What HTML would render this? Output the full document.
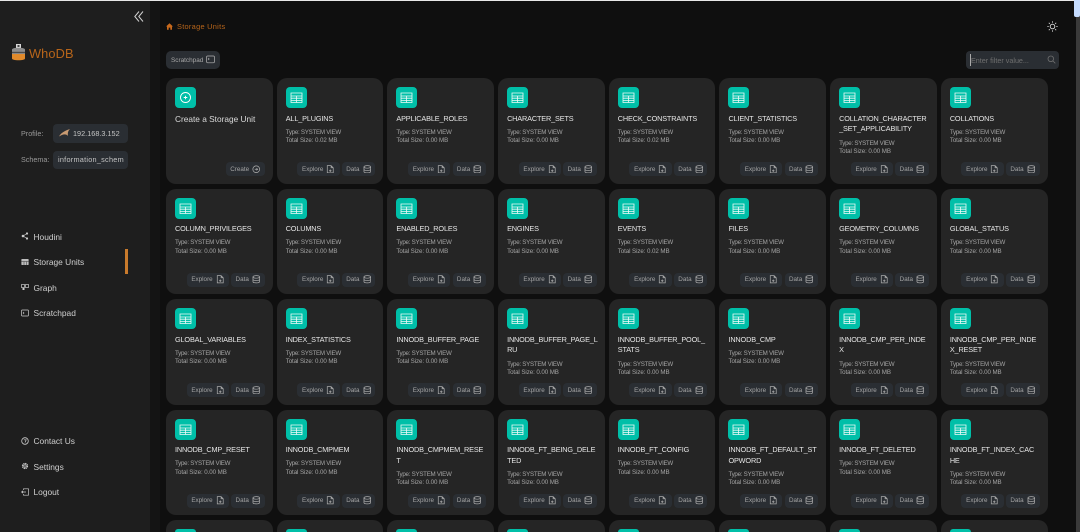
<!DOCTYPE html>
<html><head><meta charset="utf-8"><style>
*{box-sizing:border-box}
html,body{margin:0;width:1080px;height:532px;overflow:hidden;background:#0f0f0f;font-family:"Liberation Sans",sans-serif}
#page{position:relative;width:1080px;height:532px;overflow:hidden;background:#0f0f0f}
.abs{position:absolute}
#side{left:0;top:0;width:150px;height:532px;background:#1e1e1e}
#gut{left:150px;top:0;width:10px;height:532px;background:#141414}
.nav{position:absolute;left:33.5px;font-size:8.4px;line-height:12px;color:#cfcfcf;white-space:nowrap}
.nav svg{position:absolute;left:-13px;top:1.5px;width:8px;height:8px}
.lab{position:absolute;left:21px;font-size:7.2px;line-height:10px;color:#9a9a9a}
.sel{position:absolute;left:53px;width:75px;background:#2a2e33;border-radius:4px;color:#c4c4c4;font-size:7.3px;overflow:hidden;white-space:nowrap}
#grid{position:absolute;left:166px;top:78px;height:454px;overflow:hidden;display:grid;grid-template-columns:repeat(8,106.7px);grid-template-rows:repeat(4,105.5px) 12px;column-gap:4px;row-gap:5px}
.c{position:relative;background:#252525;border-radius:10px;padding:9px;overflow:hidden}
.c.last{border-radius:10px 10px 0 0;padding-bottom:0}
.c.last .i{height:3px;border-radius:4px 4px 0 0}
.i{width:21px;height:21px;background:#00bfa8;border-radius:4px;display:flex;align-items:center;justify-content:center}
.i svg{width:13px;height:13px}
.t{margin-top:5.5px;font-size:7.3px;line-height:10.7px;color:#e6e6e6;letter-spacing:-.15px;white-space:nowrap}
.m{margin-top:4.6px;font-size:6.2px;line-height:8.3px;color:#a4a4a4;white-space:nowrap;letter-spacing:-.08px}
.m::first-line{letter-spacing:-.27px}
.big{font-size:8.3px;color:#dadada;margin-top:6.3px;letter-spacing:0}
.b{position:absolute;bottom:7.5px;right:8px;display:flex;gap:2.2px}
.b span{height:14px;background:#2a2e33;border-radius:4px;color:#a4a4a4;font-size:6.3px;display:flex;align-items:center;justify-content:center;gap:3px}
.b .e{width:42.5px}.b .d{width:33.5px}.b .cr{width:38.5px}
.b svg{width:8.5px;height:8.5px}
</style></head><body>
<div id="page">
<svg width="0" height="0" style="position:absolute"><defs>
<symbol id="tb" viewBox="0 0 13 13"><path d="M1 2h11v9.5H1zM1 5h11M1 7.2h11M1 9.4h11M6.5 5v6.5" fill="none" stroke="#f0fbf9" stroke-width=".8"/></symbol>
<symbol id="pl" viewBox="0 0 13 13"><circle cx="6.5" cy="6.5" r="5" fill="none" stroke="#fff" stroke-width=".9"/><path d="M4.7 6.5h3.6M6.5 4.7v3.6" stroke="#fff" stroke-width=".9"/></symbol>
<symbol id="fl" viewBox="0 0 8 8"><path d="M1.2.6h3.6l2 2v4.8H1.2zM4.8.6v2h2M2.8 5.4h2.4M4 4.2v2.4" fill="none" stroke="#aaa" stroke-width=".7"/></symbol>
<symbol id="db" viewBox="0 0 8 8"><ellipse cx="4" cy="1.8" rx="3.1" ry="1.2" fill="none" stroke="#aaa" stroke-width=".7"/><path d="M.9 1.8v4.4c0 .7 1.4 1.2 3.1 1.2s3.1-.5 3.1-1.2V1.8M.9 4c0 .7 1.4 1.2 3.1 1.2S7.1 4.7 7.1 4" fill="none" stroke="#aaa" stroke-width=".7"/></symbol>
<symbol id="cp" viewBox="0 0 8 8"><circle cx="4" cy="4" r="3.2" fill="none" stroke="#aaa" stroke-width=".7"/><path d="M2.6 4h2.8M4.2 2.9 5.4 4 4.2 5.1" fill="none" stroke="#aaa" stroke-width=".6"/></symbol>
</defs></svg>

<div class="abs" id="side"></div><div class="abs" id="gut"></div>

<svg class="abs" style="left:134px;top:10px" width="10" height="13" viewBox="0 0 10 13"><path d="M5 1.5.8 6.5 5 11.5M9 1.5 4.8 6.5 9 11.5" fill="none" stroke="#d0d0d0" stroke-width="1"/></svg>

<svg class="abs" style="left:11px;top:43px" width="15" height="19" viewBox="0 0 15 19"><rect x="5" y="1" width="5" height="5" fill="#d8d8d8"/><rect x="6.5" y="2" width="2" height="2" fill="#444"/><path d="M1 6.5c0-1 2.5-1.800 6.500-1.800S14 5.500 14 6.500V11H1z" fill="#8d8d8d"/><rect x="1" y="8.8" width="13" height="1.3" fill="#4a4a4a"/><path d="M1 11h13v4.500c0 1-2.500 1.800-6.500 1.800S1 16.500 1 15.500z" fill="#e08a2c"/></svg>
<div class="abs" style="left:29px;top:45px;font-size:12.8px;line-height:17px;color:#b8651a;letter-spacing:.1px">WhoDB</div>

<div class="lab" style="top:129px">Profile:</div>
<div class="sel" style="top:124px;height:19px;line-height:19px;padding-left:20px">192.168.3.152</div>
<svg class="abs" style="left:58px;top:128px" width="13" height="10" viewBox="0 0 13 10"><path d="M1 8.500C3 5 6 3 12 1 10 3 9.500 5 10 8 8 5.500 5 6 1 8.500z" fill="#c89a72"/></svg>
<div class="lab" style="top:155px">Schema:</div>
<div class="sel" style="top:151px;height:18px;line-height:18px;padding-left:5px;letter-spacing:.25px">information_schem</div>

<div class="nav" style="top:230.5px"><svg viewBox="0 0 8 8"><circle cx="2" cy="4" r="1.3" fill="#ccc"/><circle cx="6" cy="1.5" r="1.1" fill="#ccc"/><circle cx="6" cy="6.500" r="1.1" fill="#ccc"/><path d="M2 4 6 1.500M2 4 6 6.500" stroke="#ccc" stroke-width=".7"/></svg>Houdini</div>
<div class="nav" style="top:256px"><svg viewBox="0 0 8 8"><rect x=".4" y="1" width="7.2" height="6" rx=".5" fill="#bdbdbd"/><path d="M.4 3.500h7.200M3 3.500V7M5.300 3.500V7" stroke="#333" stroke-width=".5"/></svg>Storage Units</div>
<div class="nav" style="top:281.5px"><svg viewBox="0 0 8 8"><rect x=".5" y="1.5" width="3" height="3" fill="none" stroke="#ccc" stroke-width=".7"/><rect x="4.5" y="1.5" width="3" height="3" fill="none" stroke="#ccc" stroke-width=".7"/><rect x="1.5" y="5" width="2" height="2" fill="#ccc"/></svg>Graph</div>
<div class="nav" style="top:307px"><svg viewBox="0 0 8 8"><rect x=".5" y="1" width="7" height="6" rx=".8" fill="none" stroke="#ccc" stroke-width=".7"/><path d="M2 3l1 1-1 1" fill="none" stroke="#ccc" stroke-width=".6"/></svg>Scratchpad</div>
<div class="abs" style="left:125px;top:249px;width:3px;height:25px;background:#c87a2c"></div>

<div class="nav" style="top:435px"><svg viewBox="0 0 8 8"><circle cx="4" cy="4" r="3.3" fill="none" stroke="#ccc" stroke-width=".8"/><path d="M2.800 2.800h2.400L4 5.500" fill="none" stroke="#ccc" stroke-width=".7"/></svg>Contact Us</div>
<div class="nav" style="top:460.5px"><svg viewBox="0 0 8 8"><circle cx="4" cy="4" r="2.2" fill="none" stroke="#ccc" stroke-width="1.8" stroke-dasharray="1.2 .5"/><circle cx="4" cy="4" r="1" fill="#888"/></svg>Settings</div>
<div class="nav" style="top:486px"><svg viewBox="0 0 8 8"><path d="M2.500 2V.8h5v6.400h-5V6M.5 4h4.500M2 2.800.5 4 2 5.200" fill="none" stroke="#ccc" stroke-width=".7"/></svg>Logout</div>

<svg class="abs" style="left:166px;top:23px" width="7" height="7" viewBox="0 0 7 7"><path d="M3.500.3 7 3.500H6V6.800H4.300V4.600H2.700V6.800H1V3.500H0z" fill="#c8691c"/></svg>
<div class="abs" style="left:177px;top:21.5px;font-size:7.4px;line-height:10px;color:#b8651a;letter-spacing:.28px">Storage Units</div>

<svg class="abs" style="left:1047px;top:21px" width="11" height="11" viewBox="0 0 11 11"><circle cx="5.500" cy="5.500" r="2.300" fill="none" stroke="#ddd" stroke-width=".9"/><path d="M5.500.3v1.500M5.500 9.200v1.500M.3 5.500h1.500M9.200 5.500h1.500M1.800 1.800l1 1M8.200 8.200l1 1M1.800 9.200l1-1M8.200 2.800l1-1" stroke="#ddd" stroke-width=".8"/></svg>

<div class="abs" style="left:166px;top:51px;width:54px;height:18px;background:#2a2e33;border-radius:5px;color:#a8a8a8;font-size:6.4px;line-height:19px;padding-left:5px">Scratchpad</div>
<svg class="abs" style="left:206px;top:55px" width="9" height="9" viewBox="0 0 9 9"><rect x=".6" y="1" width="7.8" height="6.8" rx="1" fill="none" stroke="#b5b5b5" stroke-width=".7"/><path d="M2 3l1.200 1L2 5" fill="none" stroke="#b5b5b5" stroke-width=".6"/></svg>

<div class="abs" style="left:966px;top:51px;width:93px;height:18px;background:#2a2e33;border-radius:4px;color:#6f6f6f;font-size:7.2px;line-height:19px;padding-left:5px">Enter filter value...</div>
<div class="abs" style="left:970px;top:54px;width:1px;height:12px;background:#aaa"></div>
<svg class="abs" style="left:1047px;top:55px" width="9" height="9" viewBox="0 0 9 9"><circle cx="3.800" cy="3.800" r="2.800" fill="none" stroke="#6f6f6f" stroke-width=".8"/><path d="M6 6l2.300 2.300" stroke="#6f6f6f" stroke-width=".8"/></svg>

<div id="grid">
<div class="c"><div class="i"><svg><use href="#pl"/></svg></div><div class="t big">Create a Storage Unit</div><div class="b"><span class="cr">Create<svg><use href="#cp"/></svg></span></div></div>
<div class="c"><div class="i"><svg><use href="#tb"/></svg></div><div class="t">ALL_PLUGINS</div><div class="m">Type: SYSTEM VIEW<br>Total Size: 0.02 MB</div><div class="b"><span class="e">Explore<svg><use href="#fl"/></svg></span><span class="d">Data<svg><use href="#db"/></svg></span></div></div>
<div class="c"><div class="i"><svg><use href="#tb"/></svg></div><div class="t">APPLICABLE_ROLES</div><div class="m">Type: SYSTEM VIEW<br>Total Size: 0.00 MB</div><div class="b"><span class="e">Explore<svg><use href="#fl"/></svg></span><span class="d">Data<svg><use href="#db"/></svg></span></div></div>
<div class="c"><div class="i"><svg><use href="#tb"/></svg></div><div class="t">CHARACTER_SETS</div><div class="m">Type: SYSTEM VIEW<br>Total Size: 0.00 MB</div><div class="b"><span class="e">Explore<svg><use href="#fl"/></svg></span><span class="d">Data<svg><use href="#db"/></svg></span></div></div>
<div class="c"><div class="i"><svg><use href="#tb"/></svg></div><div class="t">CHECK_CONSTRAINTS</div><div class="m">Type: SYSTEM VIEW<br>Total Size: 0.02 MB</div><div class="b"><span class="e">Explore<svg><use href="#fl"/></svg></span><span class="d">Data<svg><use href="#db"/></svg></span></div></div>
<div class="c"><div class="i"><svg><use href="#tb"/></svg></div><div class="t">CLIENT_STATISTICS</div><div class="m">Type: SYSTEM VIEW<br>Total Size: 0.00 MB</div><div class="b"><span class="e">Explore<svg><use href="#fl"/></svg></span><span class="d">Data<svg><use href="#db"/></svg></span></div></div>
<div class="c"><div class="i"><svg><use href="#tb"/></svg></div><div class="t">COLLATION_CHARACTER<br>_SET_APPLICABILITY</div><div class="m">Type: SYSTEM VIEW<br>Total Size: 0.00 MB</div><div class="b"><span class="e">Explore<svg><use href="#fl"/></svg></span><span class="d">Data<svg><use href="#db"/></svg></span></div></div>
<div class="c"><div class="i"><svg><use href="#tb"/></svg></div><div class="t">COLLATIONS</div><div class="m">Type: SYSTEM VIEW<br>Total Size: 0.00 MB</div><div class="b"><span class="e">Explore<svg><use href="#fl"/></svg></span><span class="d">Data<svg><use href="#db"/></svg></span></div></div>

<div class="c"><div class="i"><svg><use href="#tb"/></svg></div><div class="t">COLUMN_PRIVILEGES</div><div class="m">Type: SYSTEM VIEW<br>Total Size: 0.00 MB</div><div class="b"><span class="e">Explore<svg><use href="#fl"/></svg></span><span class="d">Data<svg><use href="#db"/></svg></span></div></div>
<div class="c"><div class="i"><svg><use href="#tb"/></svg></div><div class="t">COLUMNS</div><div class="m">Type: SYSTEM VIEW<br>Total Size: 0.00 MB</div><div class="b"><span class="e">Explore<svg><use href="#fl"/></svg></span><span class="d">Data<svg><use href="#db"/></svg></span></div></div>
<div class="c"><div class="i"><svg><use href="#tb"/></svg></div><div class="t">ENABLED_ROLES</div><div class="m">Type: SYSTEM VIEW<br>Total Size: 0.00 MB</div><div class="b"><span class="e">Explore<svg><use href="#fl"/></svg></span><span class="d">Data<svg><use href="#db"/></svg></span></div></div>
<div class="c"><div class="i"><svg><use href="#tb"/></svg></div><div class="t">ENGINES</div><div class="m">Type: SYSTEM VIEW<br>Total Size: 0.00 MB</div><div class="b"><span class="e">Explore<svg><use href="#fl"/></svg></span><span class="d">Data<svg><use href="#db"/></svg></span></div></div>
<div class="c"><div class="i"><svg><use href="#tb"/></svg></div><div class="t">EVENTS</div><div class="m">Type: SYSTEM VIEW<br>Total Size: 0.02 MB</div><div class="b"><span class="e">Explore<svg><use href="#fl"/></svg></span><span class="d">Data<svg><use href="#db"/></svg></span></div></div>
<div class="c"><div class="i"><svg><use href="#tb"/></svg></div><div class="t">FILES</div><div class="m">Type: SYSTEM VIEW<br>Total Size: 0.00 MB</div><div class="b"><span class="e">Explore<svg><use href="#fl"/></svg></span><span class="d">Data<svg><use href="#db"/></svg></span></div></div>
<div class="c"><div class="i"><svg><use href="#tb"/></svg></div><div class="t">GEOMETRY_COLUMNS</div><div class="m">Type: SYSTEM VIEW<br>Total Size: 0.00 MB</div><div class="b"><span class="e">Explore<svg><use href="#fl"/></svg></span><span class="d">Data<svg><use href="#db"/></svg></span></div></div>
<div class="c"><div class="i"><svg><use href="#tb"/></svg></div><div class="t">GLOBAL_STATUS</div><div class="m">Type: SYSTEM VIEW<br>Total Size: 0.00 MB</div><div class="b"><span class="e">Explore<svg><use href="#fl"/></svg></span><span class="d">Data<svg><use href="#db"/></svg></span></div></div>

<div class="c"><div class="i"><svg><use href="#tb"/></svg></div><div class="t">GLOBAL_VARIABLES</div><div class="m">Type: SYSTEM VIEW<br>Total Size: 0.00 MB</div><div class="b"><span class="e">Explore<svg><use href="#fl"/></svg></span><span class="d">Data<svg><use href="#db"/></svg></span></div></div>
<div class="c"><div class="i"><svg><use href="#tb"/></svg></div><div class="t">INDEX_STATISTICS</div><div class="m">Type: SYSTEM VIEW<br>Total Size: 0.00 MB</div><div class="b"><span class="e">Explore<svg><use href="#fl"/></svg></span><span class="d">Data<svg><use href="#db"/></svg></span></div></div>
<div class="c"><div class="i"><svg><use href="#tb"/></svg></div><div class="t">INNODB_BUFFER_PAGE</div><div class="m">Type: SYSTEM VIEW<br>Total Size: 0.00 MB</div><div class="b"><span class="e">Explore<svg><use href="#fl"/></svg></span><span class="d">Data<svg><use href="#db"/></svg></span></div></div>
<div class="c"><div class="i"><svg><use href="#tb"/></svg></div><div class="t">INNODB_BUFFER_PAGE_L<br>RU</div><div class="m">Type: SYSTEM VIEW<br>Total Size: 0.00 MB</div><div class="b"><span class="e">Explore<svg><use href="#fl"/></svg></span><span class="d">Data<svg><use href="#db"/></svg></span></div></div>
<div class="c"><div class="i"><svg><use href="#tb"/></svg></div><div class="t">INNODB_BUFFER_POOL_<br>STATS</div><div class="m">Type: SYSTEM VIEW<br>Total Size: 0.00 MB</div><div class="b"><span class="e">Explore<svg><use href="#fl"/></svg></span><span class="d">Data<svg><use href="#db"/></svg></span></div></div>
<div class="c"><div class="i"><svg><use href="#tb"/></svg></div><div class="t">INNODB_CMP</div><div class="m">Type: SYSTEM VIEW<br>Total Size: 0.00 MB</div><div class="b"><span class="e">Explore<svg><use href="#fl"/></svg></span><span class="d">Data<svg><use href="#db"/></svg></span></div></div>
<div class="c"><div class="i"><svg><use href="#tb"/></svg></div><div class="t">INNODB_CMP_PER_INDE<br>X</div><div class="m">Type: SYSTEM VIEW<br>Total Size: 0.00 MB</div><div class="b"><span class="e">Explore<svg><use href="#fl"/></svg></span><span class="d">Data<svg><use href="#db"/></svg></span></div></div>
<div class="c"><div class="i"><svg><use href="#tb"/></svg></div><div class="t">INNODB_CMP_PER_INDE<br>X_RESET</div><div class="m">Type: SYSTEM VIEW<br>Total Size: 0.00 MB</div><div class="b"><span class="e">Explore<svg><use href="#fl"/></svg></span><span class="d">Data<svg><use href="#db"/></svg></span></div></div>

<div class="c"><div class="i"><svg><use href="#tb"/></svg></div><div class="t">INNODB_CMP_RESET</div><div class="m">Type: SYSTEM VIEW<br>Total Size: 0.00 MB</div><div class="b"><span class="e">Explore<svg><use href="#fl"/></svg></span><span class="d">Data<svg><use href="#db"/></svg></span></div></div>
<div class="c"><div class="i"><svg><use href="#tb"/></svg></div><div class="t">INNODB_CMPMEM</div><div class="m">Type: SYSTEM VIEW<br>Total Size: 0.00 MB</div><div class="b"><span class="e">Explore<svg><use href="#fl"/></svg></span><span class="d">Data<svg><use href="#db"/></svg></span></div></div>
<div class="c"><div class="i"><svg><use href="#tb"/></svg></div><div class="t">INNODB_CMPMEM_RESE<br>T</div><div class="m">Type: SYSTEM VIEW<br>Total Size: 0.00 MB</div><div class="b"><span class="e">Explore<svg><use href="#fl"/></svg></span><span class="d">Data<svg><use href="#db"/></svg></span></div></div>
<div class="c"><div class="i"><svg><use href="#tb"/></svg></div><div class="t">INNODB_FT_BEING_DELE<br>TED</div><div class="m">Type: SYSTEM VIEW<br>Total Size: 0.00 MB</div><div class="b"><span class="e">Explore<svg><use href="#fl"/></svg></span><span class="d">Data<svg><use href="#db"/></svg></span></div></div>
<div class="c"><div class="i"><svg><use href="#tb"/></svg></div><div class="t">INNODB_FT_CONFIG</div><div class="m">Type: SYSTEM VIEW<br>Total Size: 0.00 MB</div><div class="b"><span class="e">Explore<svg><use href="#fl"/></svg></span><span class="d">Data<svg><use href="#db"/></svg></span></div></div>
<div class="c"><div class="i"><svg><use href="#tb"/></svg></div><div class="t">INNODB_FT_DEFAULT_ST<br>OPWORD</div><div class="m">Type: SYSTEM VIEW<br>Total Size: 0.00 MB</div><div class="b"><span class="e">Explore<svg><use href="#fl"/></svg></span><span class="d">Data<svg><use href="#db"/></svg></span></div></div>
<div class="c"><div class="i"><svg><use href="#tb"/></svg></div><div class="t">INNODB_FT_DELETED</div><div class="m">Type: SYSTEM VIEW<br>Total Size: 0.00 MB</div><div class="b"><span class="e">Explore<svg><use href="#fl"/></svg></span><span class="d">Data<svg><use href="#db"/></svg></span></div></div>
<div class="c"><div class="i"><svg><use href="#tb"/></svg></div><div class="t">INNODB_FT_INDEX_CAC<br>HE</div><div class="m">Type: SYSTEM VIEW<br>Total Size: 0.00 MB</div><div class="b"><span class="e">Explore<svg><use href="#fl"/></svg></span><span class="d">Data<svg><use href="#db"/></svg></span></div></div>

<div class="c last"><div class="i"></div></div><div class="c last"><div class="i"></div></div><div class="c last"><div class="i"></div></div><div class="c last"><div class="i"></div></div><div class="c last"><div class="i"></div></div><div class="c last"><div class="i"></div></div><div class="c last"><div class="i"></div></div><div class="c last"><div class="i"></div></div>
</div>

<div class="abs" style="left:0;top:0;width:1074px;height:1px;background:#e8e8e8"></div>
<div class="abs" style="left:1076px;top:0;width:4px;height:532px;background:#3a3a3a"></div>
<div class="abs" style="left:1074px;top:0;width:6px;height:17px;background:#c5dcff;border-radius:0 0 2px 2px"></div>
</div>
</body></html>
